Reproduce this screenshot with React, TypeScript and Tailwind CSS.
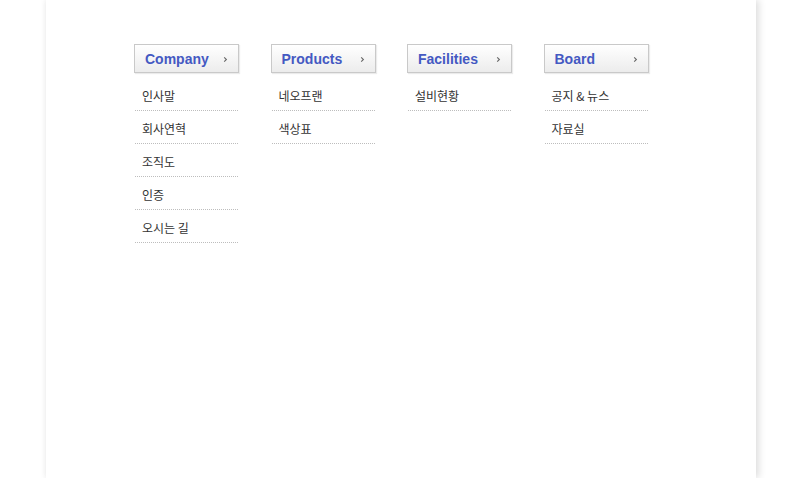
const menus = [
  { title: "Company", items: ["인사말", "회사연혁", "조직도", "인증", "오시는 길"] },
  { title: "Products", items: ["네오프랜", "색상표"] },
  { title: "Facilities", items: ["설비현황"] },
  { title: "Board", items: ["공지 & 뉴스", "자료실"] },
];

const Chevron = () => (
  <svg width="5" height="7" viewBox="0 0 5 7" className="text-[#666]">
    <path d="M1.2 1.3 L3.4 3.5 L1.2 5.7" fill="none" stroke="currentColor" strokeWidth="1.1" />
  </svg>
);

export default function App() {
  return (
    <div className="min-h-screen bg-white">
      <div className="ml-[46px] w-[710px] h-[478px] bg-white shadow-[3px_0_7px_rgba(0,0,0,0.13),-2px_0_5px_rgba(0,0,0,0.04)]">
        <div className="flex gap-[31.5px] pl-[88px] pt-[44px]">
          {menus.map((m) => (
            <div key={m.title} className="w-[105px]">
              <div className="flex h-[29px] items-center justify-between border border-[#c9c9c9] bg-gradient-to-b from-white to-[#ececec] pl-[10px] pr-[10px] pt-[2px] shadow-[1px_1px_1px_rgba(0,0,0,0.08)]">
                <span className="font-['Liberation_Sans',Arial,sans-serif] text-[14px] font-bold text-[#4459c2]">
                  {m.title}
                </span>
                <Chevron />
              </div>
              <ul className="mt-[5px]">
                {m.items.map((it) => (
                  <li
                    key={it}
                    className="mx-[1px] flex h-[33px] items-center border-b border-dotted border-[#bdbdbd] pl-[7px] pt-[3px] font-['Noto_Sans_CJK_KR',sans-serif] text-[12px] text-[#333]"
                  >
                    {it}
                  </li>
                ))}
              </ul>
            </div>
          ))}
        </div>
      </div>
    </div>
  );
}
